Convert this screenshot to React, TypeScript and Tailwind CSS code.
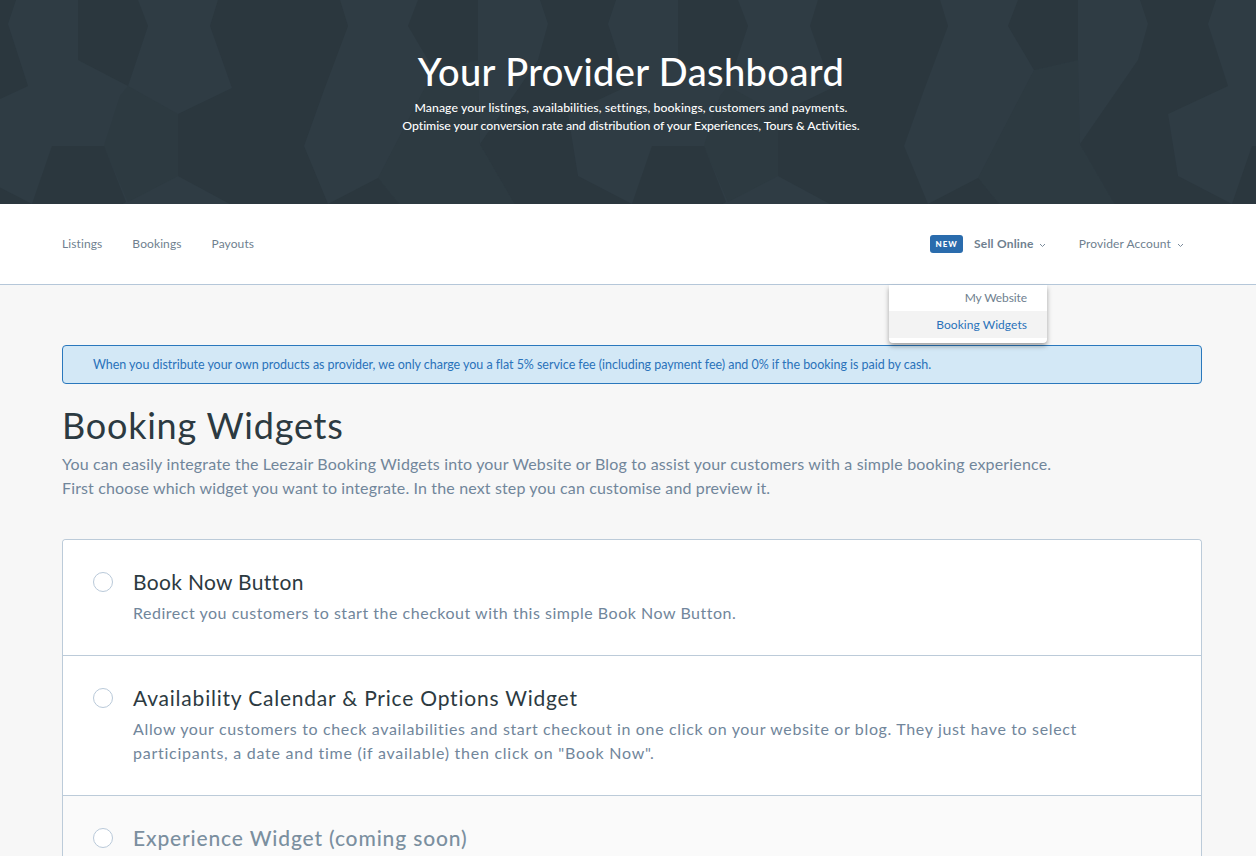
import React from "react";

const dark: string[] = [
  "78,0 138,0 148,26 128,86 78,60",
  "218,0 340,0 348,26 324,90 304,146 328,204 278,230 178,176 178,114 232,88 210,26",
  "52,146 104,146 126,202 78,230 32,204",
  "328,204 378,178 432,245 340,245",
  "408,26 418,0 478,0 478,60 434,70",
  "540,0 548,24 538,60 480,144 532,234 632,204 578,176 568,114 628,86 608,24 616,0",
];
const mid: string[] = [
  "128,86 178,114 178,176 128,202 104,146 120,96",
  "478,60 434,70 378,178 432,245 532,234 480,144",
];

function HeroPattern() {
  return (
    <svg className="absolute inset-0 h-full w-full" viewBox="0 0 1256 204" preserveAspectRatio="none" aria-hidden="true">
      {[-600, 0, 600, 1200].map((x) => (
        <g key={x} transform={`translate(${x} 0)`}>
          {mid.map((p) => (
            <polygon key={p} points={p} fill="#2d3a41" />
          ))}
          {dark.map((p) => (
            <polygon key={p} points={p} fill="#2b373e" />
          ))}
        </g>
      ))}
    </svg>
  );
}

function Chevron() {
  return (
    <svg width="7" height="5" viewBox="0 0 7 5" fill="none" className="mt-[2px]" aria-hidden="true">
      <path d="M1 1l2.5 2.5L6 1" stroke="#7b8b9b" strokeWidth="1" />
    </svg>
  );
}

function Row({
  title,
  children,
  muted,
  titleClass,
  textClass,
}: {
  title: string;
  children?: React.ReactNode;
  muted?: boolean;
  titleClass: string;
  textClass?: string;
}) {
  return (
    <div className={`flex border-b border-[#bccbd9] pl-[30px] pr-8 pt-[27px] pb-[30px] ${muted ? "bg-[#fafafa]" : "bg-white"}`}>
      <div className="mt-[5px] mr-5 h-5 w-5 shrink-0 rounded-full border border-[#b9c9d9] bg-white" />
      <div>
        <div className={`text-[21px] leading-[30px] ${titleClass} ${muted ? "font-medium text-[#7b8f9f]" : "text-[#2c3a41]"}`}>{title}</div>
        {children ? <div className={`mt-[4px] text-[16px] leading-[24px] text-[#71869b] ${textClass}`}>{children}</div> : null}
      </div>
    </div>
  );
}

export default function App() {
  return (
    <div className="relative h-[856px] w-[1256px] overflow-hidden bg-[#f7f7f7] font-['Lato','Liberation_Sans',sans-serif]">
      <header className="relative flex h-[204px] flex-col items-center bg-[#2f3c44] pt-[47px] pl-[6px] text-white">
        <HeroPattern />
        <h1 className="relative text-[38px] leading-[48px] font-medium tracking-[0.4px]">Your Provider Dashboard</h1>
        <p className="relative mt-[4px] text-center text-[12.25px] leading-[18px] font-medium tracking-[-0.05px]">
          <span className="tracking-[0.07px]">Manage your listings, availabilities, settings, bookings, customers and payments.</span>
          <br />
          Optimise your conversion rate and distribution of your Experiences, Tours &amp; Activities.
        </p>
      </header>

      <nav className="flex h-[81px] items-center border-b border-[#b5c7d9] bg-white pl-[62px] pr-[72px] text-[12px] tracking-[0.1px] text-[#6f7f8f]">
        <a>Listings</a>
        <a className="ml-[30px]">Bookings</a>
        <a className="ml-[30px]">Payouts</a>
        <div className="ml-auto flex items-center">
          <span className="mr-[11px] flex h-[18px] w-[33px] items-center justify-center rounded-[3px] bg-[#2a6cad] text-[8px] font-black tracking-[1px] text-white">NEW</span>
          <span className="mr-[5px] font-bold tracking-[0.2px]">Sell Online</span>
          <Chevron />
          <span className="ml-[33px] mr-[6px] tracking-[0.12px]">Provider Account</span>
          <Chevron />
        </div>
      </nav>

      <div className="absolute left-[889px] top-[285px] w-[158px] rounded-b-[4px] bg-white pb-[5px] text-right text-[12px] tracking-[0.05px] shadow-[0_3px_5px_rgba(0,0,0,0.35)]">
        <div className="h-[26px] pr-[20px] leading-[26px] tracking-[-0.1px] text-[#6f7f8f]">My Website</div>
        <div className="h-[27px] bg-[#f3f3f3] pr-[20px] leading-[27px] text-[#2a72ba]">Booking Widgets</div>
      </div>

      <main className="pl-[62px] pr-[54px] pt-[60px]">
        <div className="flex h-[39px] items-center rounded-[4px] border border-[#2a78bd] bg-[#d3e8f6] pt-[2px] pl-[30px] text-[12.5px] tracking-[-0.04px] text-[#2a72ba]">
          When you distribute your own products as provider, we only charge you a flat 5% service fee (including payment fee) and 0% if the booking is paid by cash.
        </div>
        <h2 className="mt-[18px] text-[36px] leading-[46px] tracking-[0.77px] text-[#2c3a41]">Booking Widgets</h2>
        <p className="mt-[4px] text-[16px] leading-[24px] tracking-[0.17px] text-[#71869b]">
          You can easily integrate the Leezair Booking Widgets into your Website or Blog to assist your customers with a simple booking experience.
          <br />
          <span className="tracking-[0.14px]">First choose which widget you want to integrate. In the next step you can customise and preview it.</span>
        </p>
        <div className="mt-[39px] overflow-hidden rounded-[4px] border border-b-0 border-[#bccbd9]">
          <Row title="Book Now Button" titleClass="tracking-[0.32px]" textClass="tracking-[0.52px]">
            Redirect you customers to start the checkout with this simple Book Now Button.
          </Row>
          <Row title="Availability Calendar & Price Options Widget" titleClass="tracking-[0.79px]" textClass="tracking-[0.65px]">
            Allow your customers to check availabilities and start checkout in one click on your website or blog. They just have to select
            <br />
            <span className="tracking-[0.74px]">participants, a date and time (if available) then click on "Book Now".</span>
          </Row>
          <Row title="Experience Widget (coming soon)" muted titleClass="tracking-[0.85px]" />
        </div>
      </main>
    </div>
  );
}
